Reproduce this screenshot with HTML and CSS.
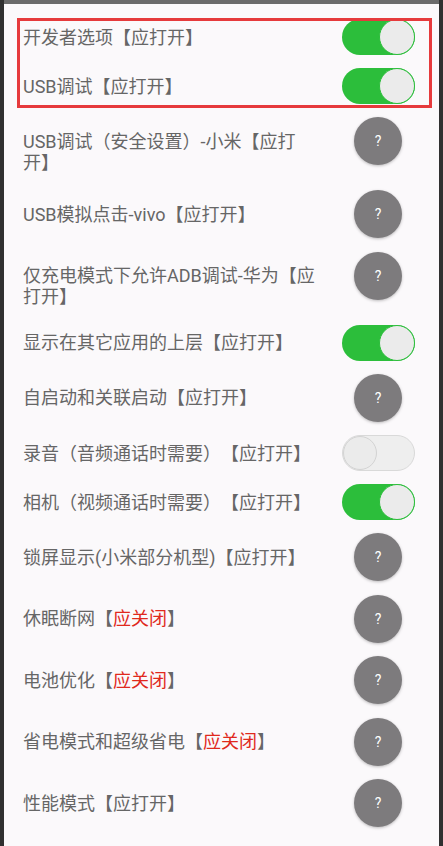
FILE: index.html
```html
<!DOCTYPE html>
<html lang="zh-CN">
<head>
    <meta charset="UTF-8">
    <meta name="viewport" content="width=device-width, initial-scale=1.0">
    <title>权限设置</title>
    <link rel="stylesheet" href="styles.css">
</head>
<body>
    <div class="screen">
        <div class="item item--switch">
            <div class="label">开发者选项【应打开】</div>
            <div class="control"><span class="switch"><span class="knob"></span></span></div>
        </div>
        <div class="item item--switch">
            <div class="label">USB调试【应打开】</div>
            <div class="control"><span class="switch"><span class="knob"></span></span></div>
        </div>
        <div class="item">
            <div class="label">USB调试（安全设置）-小米【应打开】</div>
            <div class="control"><span class="help">?</span></div>
        </div>
        <div class="item">
            <div class="label">USB模拟点击-vivo【应打开】</div>
            <div class="control"><span class="help">?</span></div>
        </div>
        <div class="item">
            <div class="label">仅充电模式下允许ADB调试-华为【应打开】</div>
            <div class="control"><span class="help">?</span></div>
        </div>
        <div class="item item--switch">
            <div class="label">显示在其它应用的上层【应打开】</div>
            <div class="control"><span class="switch"><span class="knob"></span></span></div>
        </div>
        <div class="item">
            <div class="label">自启动和关联启动【应打开】</div>
            <div class="control"><span class="help">?</span></div>
        </div>
        <div class="item item--switch">
            <div class="label">录音（音频通话时需要）【应打开】</div>
            <div class="control"><span class="switch switch--off"><span class="knob"></span></span></div>
        </div>
        <div class="item item--switch">
            <div class="label">相机（视频通话时需要）【应打开】</div>
            <div class="control"><span class="switch"><span class="knob"></span></span></div>
        </div>
        <div class="item">
            <div class="label">锁屏显示(小米部分机型)【应打开】</div>
            <div class="control"><span class="help">?</span></div>
        </div>
        <div class="item">
            <div class="label">休眠断网【<span class="warn">应关闭</span>】</div>
            <div class="control"><span class="help">?</span></div>
        </div>
        <div class="item">
            <div class="label">电池优化【<span class="warn">应关闭</span>】</div>
            <div class="control"><span class="help">?</span></div>
        </div>
        <div class="item">
            <div class="label">省电模式和超级省电【<span class="warn">应关闭</span>】</div>
            <div class="control"><span class="help">?</span></div>
        </div>
        <div class="item">
            <div class="label">性能模式【应打开】</div>
            <div class="control"><span class="help">?</span></div>
        </div>

        <!-- 标注框 -->
        <div class="mark"></div>
    </div>
</body>
</html>
```

FILE: styles.css
```css
body {
    margin: 0;
    background: #303030;
    font-family: Roboto, "Noto Sans CJK SC", sans-serif;
    color: #666666;
}
.screen {
    position: relative;
    margin: 0 4px;
    border-top: 4px solid #6b6b6b;
    background: #fbf9fb;
    min-height: 846px;
    padding-top: 8.5px;
    box-sizing: border-box;
}
.item {
    display: flex;
    align-items: flex-start;
    padding: 0 21px 0 19px;
}
.label {
    flex: 1;
    font-size: 18px;
    line-height: 21px;
    text-spacing-trim: space-all;
    padding: 20.25px 10px 10.75px 0;
}
.item--switch .label {
    padding: 14px 10px 14px 0;
}
.warn {
    color: #e0291d;
}
.control {
    width: 80px;
    display: flex;
    justify-content: center;
    padding: 6.75px 0;
}
.item--switch .control {
    padding: 6.5px 0;
}
.help {
    width: 48px;
    height: 48px;
    border-radius: 50%;
    background: #7d7b7d;
    box-shadow: 0 1px 3px rgba(0, 0, 0, 0.25);
    color: #ffffff;
    font-size: 14px;
    display: flex;
    align-items: center;
    justify-content: center;
}
.switch {
    width: 73px;
    height: 36px;
    box-sizing: border-box;
    border-radius: 18px;
    background: #2cbe3b;
    display: flex;
    justify-content: flex-end;
}
.knob {
    width: 36px;
    height: 36px;
    box-sizing: border-box;
    border-radius: 50%;
    background: #ebebeb;
    border: 1px solid #2cbe3b;
}
.switch--off {
    background: #eeeeee;
    border: 1px solid #d9d9d9;
    justify-content: flex-start;
}
.switch--off .knob {
    width: 34px;
    height: 34px;
    border-color: #d3d3d3;
}
.mark {
    position: absolute;
    left: 13px;
    top: 14px;
    width: 415px;
    height: 90px;
    border: 3px solid #e63a3c;
    box-sizing: border-box;
}
```
